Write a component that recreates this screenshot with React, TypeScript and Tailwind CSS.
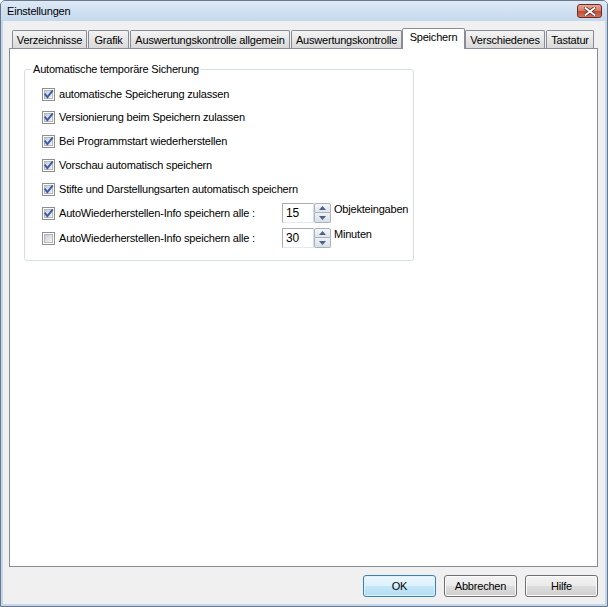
import React from "react";

function CheckBox({ checked }: { checked: boolean }) {
  return (
    <svg width="13" height="13" viewBox="0 0 13 13" className="shrink-0">
      <defs>
        <linearGradient id="cbg" x1="0" y1="0" x2="1" y2="1">
          <stop offset="0" stopColor="#c6cad0" />
          <stop offset="1" stopColor="#f7f7f7" />
        </linearGradient>
      </defs>
      <rect x="0.5" y="0.5" width="12" height="12" fill="#ffffff" stroke="#8e8f8f" />
      <rect x="2.5" y="2.5" width="8" height="8" fill="url(#cbg)" stroke="#b4b8be" />
      {checked && (
        <path d="M3.2 6.4 L5.4 9.2 L10.2 3.2" stroke="#3b5ca8" strokeWidth="1.9" fill="none" strokeLinecap="square" />
      )}
    </svg>
  );
}

function Spinner({ value }: { value: string }) {
  return (
    <div className="flex h-[20px] shrink-0">
      <div className="w-[32px] h-[20px] border border-[#abadb3] border-r-[#dbdfe6] border-b-[#e3e9ef] bg-white pl-[3px] leading-[18px] text-[12px]">
        {value}
      </div>
      <div className="w-[17px] h-[20px] flex flex-col">
        <div className="h-[10px] border border-[#aab2bc] rounded-t-[2px] bg-[linear-gradient(to_bottom,#f4f7fa,#dfe5ec)] flex items-center justify-center">
          <svg width="7" height="4" viewBox="0 0 7 4">
            <path d="M0 4 L3.5 0 L7 4 Z" fill="#4d6185" />
          </svg>
        </div>
        <div className="h-[10px] border border-t-0 border-[#aab2bc] rounded-b-[2px] bg-[linear-gradient(to_bottom,#eef2f6,#d8dfe7)] flex items-center justify-center">
          <svg width="7" height="4" viewBox="0 0 7 4">
            <path d="M0 0 L7 0 L3.5 4 Z" fill="#4d6185" />
          </svg>
        </div>
      </div>
    </div>
  );
}

function Row({ checked, label, h }: { checked: boolean; label: string; h: string }) {
  return (
    <div className={`flex items-center gap-[4px] ${h}`}>
      <CheckBox checked={checked} />
      <span className="leading-[13px] whitespace-nowrap">{label}</span>
    </div>
  );
}

function SpinRow({ checked, value, unit, h }: { checked: boolean; value: string; unit: string; h: string }) {
  return (
    <div className={`flex items-center ${h}`}>
      <CheckBox checked={checked} />
      <span className="leading-[13px] whitespace-nowrap ml-[4px] w-[223px]">
        AutoWiederherstellen-Info speichern alle :
      </span>
      <div className="flex items-start">
        <Spinner value={value} />
        <span className="leading-[13px] ml-[3px] whitespace-nowrap">{unit}</span>
      </div>
    </div>
  );
}

const tabBase =
  "h-[18px] border border-b-0 border-[#898c95] rounded-t-[2px] bg-[linear-gradient(to_bottom,#f4f4f4,#e6e6e6_50%,#d9d9d9)] text-center leading-[13px] pt-[3px] whitespace-nowrap overflow-hidden";

function Btn({ label, def }: { label: string; def?: boolean }) {
  return (
    <div
      className={
        def
          ? "w-[73px] h-[22px] rounded-[3px] border border-[#3c7fb1] shadow-[inset_0_0_0_1px_#def3fd] bg-[linear-gradient(to_bottom,#ecf7fd_0%,#dcf1fc_48%,#c4e6f8_52%,#b3dcf3_100%)] flex items-center justify-center leading-[13px]"
          : "w-[73px] h-[22px] rounded-[3px] border border-[#707070] shadow-[inset_0_0_0_1px_#fbfbfb] bg-[linear-gradient(to_bottom,#f2f2f2_0%,#ebebeb_48%,#dddddd_52%,#cfcfcf_100%)] flex items-center justify-center leading-[13px]"
      }
    >
      {label}
    </div>
  );
}

export default function App() {
  return (
    <div className="w-[608px] h-[607px] flex flex-col border border-[#6b7889] rounded-t-[5px] overflow-hidden bg-[#c2d6ed] font-['Liberation_Sans',Arial,sans-serif] text-[11px] tracking-[-0.2px] text-black">
      {/* Title bar */}
      <div className="h-[20px] shrink-0 flex items-center justify-between pl-[6px] pr-[5px] bg-[linear-gradient(to_bottom,#dde9f6,#c4d8ee)]">
        <span className="text-[11px] leading-[13px] text-black">Einstellungen</span>
        <div className="w-[25px] h-[14px] rounded-[3px] border border-[#6e2c26] bg-[linear-gradient(to_bottom,#e8a595_0%,#d4806c_45%,#c24a34_55%,#d2765e_100%)] flex items-center justify-center">
          <svg width="12" height="9" viewBox="0 0 12 9">
            <path d="M1.5 1 L10.5 8 M10.5 1 L1.5 8" stroke="#5a2b26" strokeWidth="3.4" strokeLinecap="square" />
            <path d="M1.5 1 L10.5 8 M10.5 1 L1.5 8" stroke="#ffffff" strokeWidth="1.8" strokeLinecap="square" />
          </svg>
        </div>
      </div>

      {/* Frame + body */}
      <div className="flex-1 flex px-[2px] pb-[2px]">
        <div className="flex-1 flex flex-col bg-[#f0f0f0] pt-[7px] pl-[6px] pr-[7px] pb-[7px]">
          {/* Tabs */}
          <div className="flex items-end h-[20px] pl-[3px] shrink-0">
            <div className={`${tabBase} w-[75px] mr-[1px]`}>Verzeichnisse</div>
            <div className={`${tabBase} w-[41px] mr-[1px]`}>Grafik</div>
            <div className={`${tabBase} w-[160px] mr-[1px]`}>Auswertungskontrolle allgemein</div>
            <div className={`${tabBase} w-[111px]`}>Auswertungskontrolle</div>
            <div className="relative z-10 w-[63px] h-[21px] -mb-[1px] border border-b-0 border-[#898c95] rounded-t-[2px] bg-white text-center leading-[13px] pt-[2px] whitespace-nowrap">
              Speichern
            </div>
            <div className={`${tabBase} w-[80px] mr-[1px]`}>Verschiedenes</div>
            <div className={`${tabBase} w-[48px]`}>Tastatur</div>
          </div>

          {/* Panel */}
          <div className="h-[519px] shrink-0 border border-[#898c95] bg-white pt-[14px] pl-[14px]">
            <fieldset className="w-[390px] border border-[#d5dfe5] rounded-[3px] pb-[9px]">
              <legend className="ml-[6px] px-[2px] leading-[13px]">Automatische temporäre Sicherung</legend>
              <div className="pl-[17px] pt-[7px] flex flex-col">
                <Row checked label="automatische Speicherung zulassen" h="h-[23px]" />
                <Row checked label="Versionierung beim Speichern zulassen" h="h-[23px]" />
                <Row checked label="Bei Programmstart wiederherstellen" h="h-[24px]" />
                <Row checked label="Vorschau automatisch speichern" h="h-[24px]" />
                <Row checked label="Stifte und Darstellungsarten automatisch speichern" h="h-[24px]" />
                <SpinRow checked value="15" unit="Objekteingaben" h="h-[24px]" />
                <SpinRow checked={false} value="30" unit="Minuten" h="h-[26px]" />
              </div>
            </fieldset>
          </div>

          {/* Buttons */}
          <div className="flex justify-end gap-[8px] mt-[8px] shrink-0">
            <Btn label="OK" def />
            <Btn label="Abbrechen" />
            <Btn label="Hilfe" />
          </div>
        </div>
      </div>
    </div>
  );
}
